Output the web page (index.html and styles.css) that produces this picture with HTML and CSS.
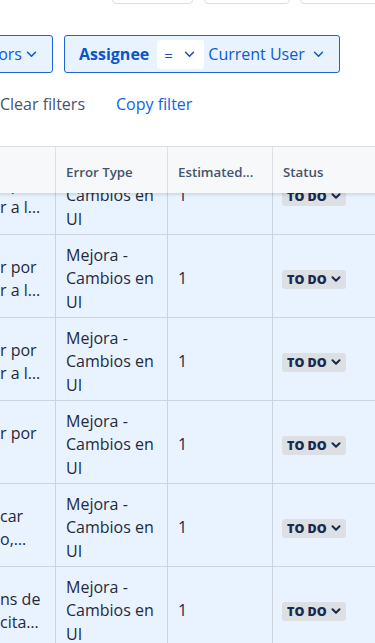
FILE: index.html
```html
<!DOCTYPE html>
<html lang="en">
<head>
<meta charset="utf-8">
<title>Issues</title>
<link rel="stylesheet" href="styles.css">
</head>
<body>
<div class="page">
  <div class="toolbar">
    <div class="tb-btn tb-1"></div>
    <div class="tb-btn tb-2"></div>
    <div class="tb-btn tb-3"></div>
  </div>

  <div class="filters">
    <button class="pill pill-first">
      <span class="pill-text">Errors</span>
      <svg class="chev" viewBox="0 0 12 8" width="12" height="8"><path d="M1.5 1.5l4.5 4.5 4.5-4.5" fill="none" stroke="currentColor" stroke-width="1.8" stroke-linecap="round" stroke-linejoin="round"/></svg>
    </button>
    <div class="pill pill-assignee">
      <span class="pill-label">Assignee</span>
      <span class="op">
        <span class="op-eq">=</span>
        <svg class="chev" viewBox="0 0 12 8" width="12" height="8"><path d="M1.5 1.5l4.5 4.5 4.5-4.5" fill="none" stroke="currentColor" stroke-width="1.8" stroke-linecap="round" stroke-linejoin="round"/></svg>
      </span>
      <span class="pill-text">Current User</span>
      <svg class="chev" viewBox="0 0 12 8" width="12" height="8"><path d="M1.5 1.5l4.5 4.5 4.5-4.5" fill="none" stroke="currentColor" stroke-width="1.8" stroke-linecap="round" stroke-linejoin="round"/></svg>
    </div>
  </div>

  <div class="actions">
    <span class="link-clear">Clear filters</span>
    <span class="link-copy">Copy filter</span>
  </div>

  <div class="table">
    <div class="thead">
      <div class="th c1"></div>
      <div class="th c2">Error Type</div>
      <div class="th c3">Estimated...</div>
      <div class="th c4">Status</div>
    </div>
    <div class="tbody">
      <div class="row first">
        <div class="td c1"><div class="ln">r por</div><div class="ln">r a l…</div></div>
        <div class="td c2">Mejora - Cambios en UI</div>
        <div class="td c3">1</div>
        <div class="td c4"><span class="lozenge">TO DO<svg class="chev-s" viewBox="0 0 10 6" width="10" height="6"><path d="M1.5 1.2l3.5 3.5 3.5-3.5" fill="none" stroke="currentColor" stroke-width="2" stroke-linecap="round" stroke-linejoin="round"/></svg></span></div>
      </div>
      <div class="row">
        <div class="td c1"><div class="ln">r por</div><div class="ln">r a l…</div></div>
        <div class="td c2">Mejora - Cambios en UI</div>
        <div class="td c3">1</div>
        <div class="td c4"><span class="lozenge">TO DO<svg class="chev-s" viewBox="0 0 10 6" width="10" height="6"><path d="M1.5 1.2l3.5 3.5 3.5-3.5" fill="none" stroke="currentColor" stroke-width="2" stroke-linecap="round" stroke-linejoin="round"/></svg></span></div>
      </div>
      <div class="row">
        <div class="td c1"><div class="ln">r por</div><div class="ln">r a l…</div></div>
        <div class="td c2">Mejora - Cambios en UI</div>
        <div class="td c3">1</div>
        <div class="td c4"><span class="lozenge">TO DO<svg class="chev-s" viewBox="0 0 10 6" width="10" height="6"><path d="M1.5 1.2l3.5 3.5 3.5-3.5" fill="none" stroke="currentColor" stroke-width="2" stroke-linecap="round" stroke-linejoin="round"/></svg></span></div>
      </div>
      <div class="row">
        <div class="td c1"><div class="ln">r por</div><div class="ln">&nbsp;</div></div>
        <div class="td c2">Mejora - Cambios en UI</div>
        <div class="td c3">1</div>
        <div class="td c4"><span class="lozenge">TO DO<svg class="chev-s" viewBox="0 0 10 6" width="10" height="6"><path d="M1.5 1.2l3.5 3.5 3.5-3.5" fill="none" stroke="currentColor" stroke-width="2" stroke-linecap="round" stroke-linejoin="round"/></svg></span></div>
      </div>
      <div class="row">
        <div class="td c1"><div class="ln">car</div><div class="ln">o,…</div></div>
        <div class="td c2">Mejora - Cambios en UI</div>
        <div class="td c3">1</div>
        <div class="td c4"><span class="lozenge">TO DO<svg class="chev-s" viewBox="0 0 10 6" width="10" height="6"><path d="M1.5 1.2l3.5 3.5 3.5-3.5" fill="none" stroke="currentColor" stroke-width="2" stroke-linecap="round" stroke-linejoin="round"/></svg></span></div>
      </div>
      <div class="row">
        <div class="td c1"><div class="ln">ns de</div><div class="ln">cita…</div></div>
        <div class="td c2">Mejora - Cambios en UI</div>
        <div class="td c3">1</div>
        <div class="td c4"><span class="lozenge">TO DO<svg class="chev-s" viewBox="0 0 10 6" width="10" height="6"><path d="M1.5 1.2l3.5 3.5 3.5-3.5" fill="none" stroke="currentColor" stroke-width="2" stroke-linecap="round" stroke-linejoin="round"/></svg></span></div>
      </div>
    </div>
  </div>
</div>
</body>
</html>
```

FILE: styles.css
```css
* { box-sizing: border-box; }
html, body { margin: 0; padding: 0; background: #ffffff; }
body {
  font-family: "Open Sans", "Noto Sans", sans-serif;
  font-size: 16px;
  color: #172b4d;
  overflow: hidden;
  width: 375px;
  height: 643px;
}
.page { width: 375px; overflow: hidden; }

/* top toolbar (scrolled off the top) */
.toolbar {
  display: flex;
  gap: 10px;
  padding-left: 112px;
  margin-top: -29px;
  height: 33px;
}
.tb-btn {
  height: 33px;
  border: 1px solid #dcdfe4;
  border-radius: 4px;
  flex: none;
}
.tb-1 { width: 81px; }
.tb-2 { width: 86px; margin-left: 1px; }
.tb-3 { width: 120px; }

/* filters */
.filters {
  display: flex;
  gap: 11px;
  margin-top: 31px;
  height: 38px;
}
.pill {
  display: flex;
  align-items: center;
  height: 38px;
  border: 1px solid #1d64d8;
  border-radius: 3px;
  background: #e9f2ff;
  color: #0c5ad6;
  font-family: inherit;
  font-size: 16px;
  flex: none;
}
.pill-first {
  width: 113px;
  margin-left: -60px;
  justify-content: flex-end;
  padding: 0 15px 0 0;
  gap: 4px;
}
.pill-assignee {
  padding: 0 15px 0 14px;
}
.pill-label {
  font-weight: 700;
  color: #0c55c9;
  margin-right: 8px;
}
.op {
  display: flex;
  align-items: center;
  height: 29px;
  width: 47px;
  padding: 0 9px 0 7px;
  justify-content: space-between;
  background: #ffffff;
  border-radius: 3px;
  color: #1d4fa8;
  margin-right: 4px;
}
.op-eq { font-size: 15px; line-height: 1; padding-top: 3px; }
.pill-assignee .pill-text { margin-right: 8px; }
.chev { display: block; flex: none; width: 11px; height: 7px; }

/* actions */
.actions {
  display: flex;
  gap: 31px;
  margin-top: 19px;
  height: 24px;
  align-items: center;
  font-size: 16px;
  line-height: 24px;
}
.link-clear { color: #44546f; margin-left: 0; }
.link-copy { color: #0c66e4; }

/* table */
.table {
  margin-top: 30px;
  margin-left: -12px;
  width: 420px;
  border-top: 1px solid #dcdfe4;
}
.thead {
  display: grid;
  grid-template-columns: 68px 112px 105px 135px;
  height: 46px;
  background: #f7f8f9;
  box-shadow: 0 2px 3px rgba(9, 30, 66, 0.13);
  position: relative;
  z-index: 1;
}
.th {
  display: block;
  padding: 2px 10px 0;
  font-size: 13.3px;
  font-weight: 600;
  color: #44546f;
  border-right: 1px solid #dcdfe4;
  white-space: nowrap;
  overflow: hidden;
  text-overflow: ellipsis;
  line-height: 47px;
}

.tbody {
  height: 460px;
  overflow: hidden;
}
.row {
  display: grid;
  grid-template-columns: 68px 112px 105px 135px;
  height: 83px;
  background: #e9f2ff;
  border-bottom: 1px solid #cbd3df;
}
.row.first { margin-top: -41px; }
.td {
  display: flex;
  align-items: center;
  padding: 6px 10px 0;
  border-right: 1px solid #cbd3df;
  line-height: 23.5px;
  font-size: 16px;
  color: #1f2a3c;
}
.td.c1 {
  flex-direction: column;
  align-items: flex-start;
  justify-content: center;
  padding: 6px 0 0 12px;
  white-space: nowrap;
  overflow: hidden;
}
.td.c2 { padding-right: 4px; }
.td.c4 { padding-left: 9px; }

.lozenge {
  display: inline-flex;
  align-items: center;
  gap: 4px;
  height: 19px;
  padding: 0 5px 0 5px;
  border-radius: 3px;
  background: #dcdfe4;
  color: #172b4d;
  font-size: 12.5px;
  font-weight: 800;
  line-height: 19px;
}
.chev-s { display: block; width: 10px; height: 6px; }
```
